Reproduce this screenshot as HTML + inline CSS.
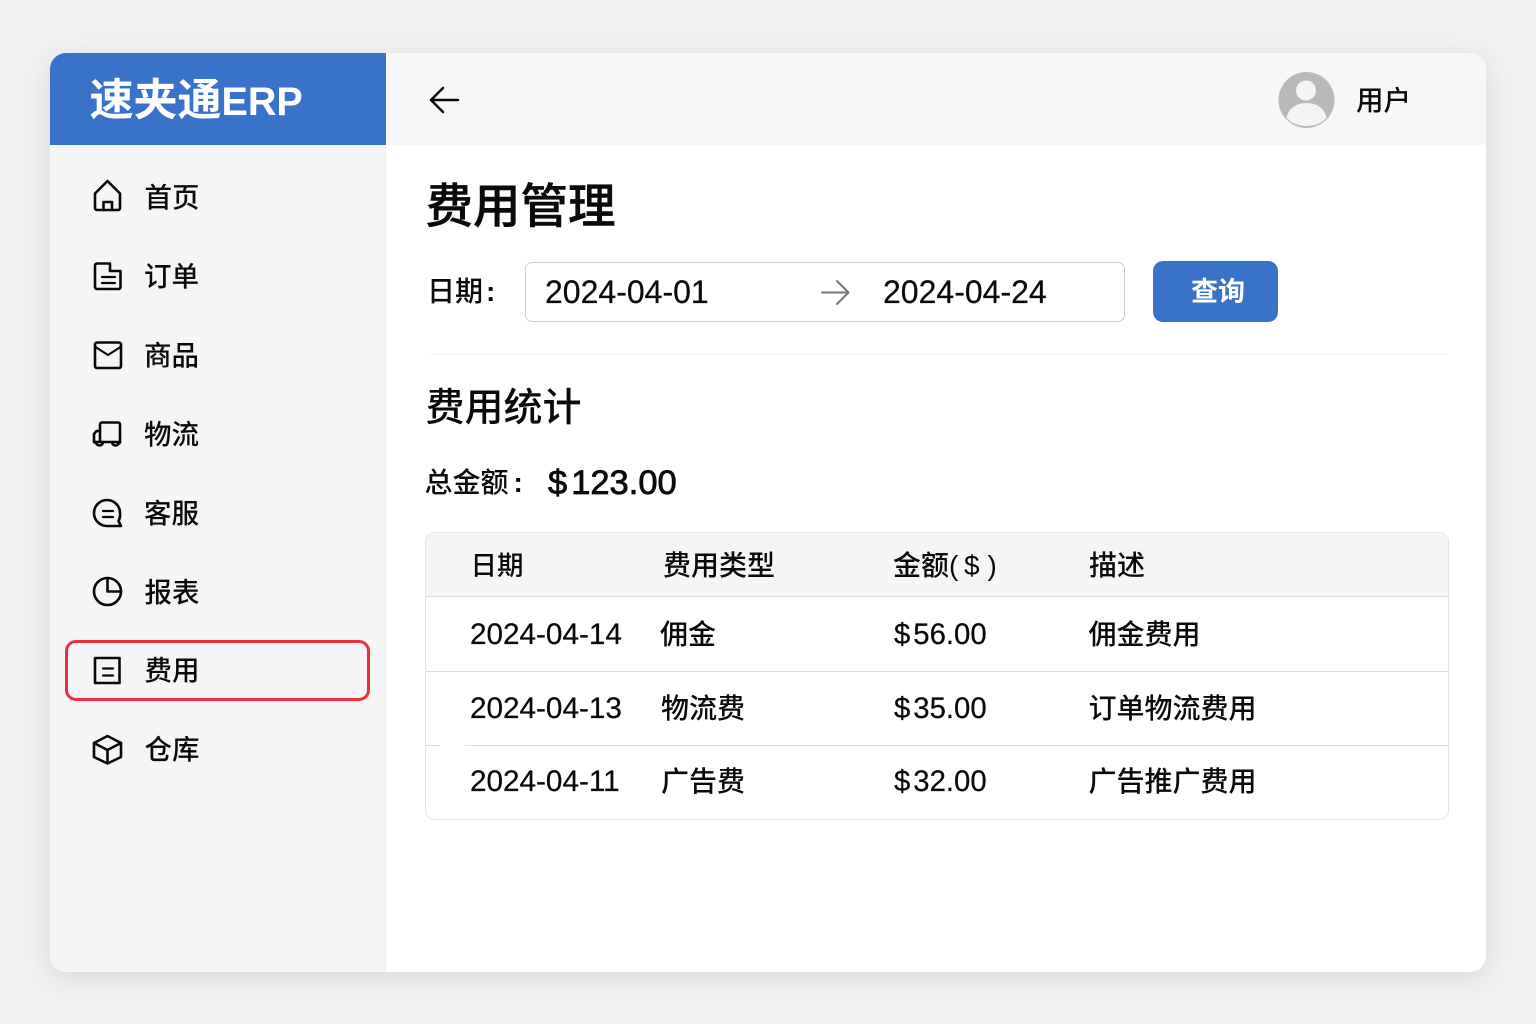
<!DOCTYPE html>
<html lang="zh-CN">
<head>
<meta charset="utf-8">
<title>费用管理</title>
<style>
html,body{margin:0;padding:0;width:1536px;height:1024px;overflow:hidden;background:#f1f1f0;}
body{position:relative;font-family:"Liberation Sans","Noto Sans CJK SC",sans-serif;color:#0a0a0a;}
.a{position:absolute;white-space:nowrap;line-height:40px;height:40px;}
.box{position:absolute;box-sizing:border-box;}
.n{font-size:27.5px;left:144.5px;font-weight:500;}
.th{font-size:28px;top:546px;font-weight:500;}
.td{font-size:28px;font-weight:500;}
.num{font-size:29.7px;-webkit-text-stroke:.25px #0a0a0a;}
.amt{font-size:29.3px;-webkit-text-stroke:.25px #0a0a0a;}
.d{margin-right:3px;}
</style>
</head>
<body>
<div class="box" style="left:50px;top:53px;width:1436px;height:919px;background:#fff;border-radius:16px;box-shadow:0 6px 26px rgba(0,0,0,.10);overflow:hidden;">
  <div class="box" style="left:0;top:0;width:336px;height:919px;background:#f5f5f5;border-right:1px solid #ededed;"></div>
  <div class="box" style="left:0;top:0;width:335.500px;height:92px;background:#3873c9;"></div>
  <div class="box" style="left:336px;top:0;width:1100px;height:92px;background:#f7f7f7;"></div>
</div>

<div class="a" style="left:89.500px;top:81px;color:#fff;font-size:44px;font-weight:700;"><span>速夹通</span><span style="font-size:39.500px;">ERP</span></div>

<div class="box" style="left:65px;top:640px;width:305px;height:61px;border:3px solid #e9303f;border-radius:11px;background:#f5f5f7;"></div>

<div class="a n" style="top:178px;">首页</div>
<div class="a n" style="top:257px;left:144px;">订单</div>
<div class="a n" style="top:336px;left:144px;">商品</div>
<div class="a n" style="top:415px;left:144px;">物流</div>
<div class="a n" style="top:494px;left:144px;">客服</div>
<div class="a n" style="top:573px;">报表</div>
<div class="a n" style="top:651px;">费用</div>
<div class="a n" style="top:730px;">仓库</div>

<div class="a" style="left:1356px;top:81px;font-size:27.500px;font-weight:500;">用户</div>

<div class="a" style="left:425.500px;top:188px;font-size:47.500px;font-weight:500;-webkit-text-stroke:.5px #0a0a0a;">费用管理</div>

<div class="a" style="left:427px;top:272px;font-size:28px;font-weight:500;">日期<span style="font-weight:700;margin-left:3px;">:</span></div>
<div class="box" style="left:525px;top:262px;width:600px;height:60px;border:1.5px solid #cbcbcb;border-radius:7px;background:#fff;"></div>
<div class="a" style="left:545px;top:272px;font-size:32px;-webkit-text-stroke:.25px #0a0a0a;">2024-04-01</div>
<div class="a" style="left:883px;top:272px;font-size:32px;-webkit-text-stroke:.25px #0a0a0a;">2024-04-24</div>
<div class="box" style="left:1153px;top:261px;width:125px;height:61px;background:#3873c9;border-radius:10px;"></div>
<div class="a" style="left:1191px;top:272px;font-size:27px;font-weight:700;color:#fff;">查询</div>

<div class="box" style="left:430px;top:353px;width:1018px;height:2px;background:#f9f9f9;"></div>

<div class="a" style="left:425.500px;top:389px;font-size:39px;font-weight:500;">费用统计</div>
<div class="a" style="left:424.500px;top:463px;font-size:28px;font-weight:500;">总金额<span style="font-weight:700;margin-left:5px;">:</span></div>
<div class="a" style="left:548px;top:463px;font-size:34.500px;-webkit-text-stroke:.8px #0a0a0a;"><span style="margin-right:4px;">$</span>123.00</div>

<div class="box" style="left:425px;top:532px;width:1024px;height:288px;border:1.5px solid #e6e6e6;border-radius:10px;background:#fff;overflow:hidden;">
  <div class="box" style="left:0;top:0;width:1024px;height:64px;background:#f5f5f5;border-bottom:1px solid #dcdcdc;"></div>
  <div class="box" style="left:0;top:138px;width:1024px;height:1px;background:#dcdcdc;"></div>
  <div class="box" style="left:0;top:212px;width:1024px;height:1px;background:#dcdcdc;"></div>
  <div class="box" style="left:14px;top:211px;width:25px;height:3px;background:#fff;"></div>
</div>

<div class="a th" style="left:470.500px;font-size:26.500px;">日期</div>
<div class="a th" style="left:663px;">费用类型</div>
<div class="a th" style="left:893px;">金额<span style="font-family:'Liberation Sans',sans-serif;">(&thinsp;$&thinsp;&hairsp;)</span></div>
<div class="a th" style="left:1089px;">描述</div>

<div class="a num" style="left:470px;top:615px;">2024-04-14</div>
<div class="a td" style="left:660px;top:615px;">佣金</div>
<div class="a amt" style="left:894px;top:615px;"><span class="d">$</span>56.00</div>
<div class="a td" style="left:1088.500px;top:615px;">佣金费用</div>

<div class="a num" style="left:470px;top:689px;">2024-04-13</div>
<div class="a td" style="left:661px;top:689px;">物流费</div>
<div class="a amt" style="left:894px;top:689px;"><span class="d">$</span>35.00</div>
<div class="a td" style="left:1088.500px;top:689px;">订单物流费用</div>

<div class="a num" style="left:470px;top:762px;">2024-04-11</div>
<div class="a td" style="left:661px;top:762px;">广告费</div>
<div class="a amt" style="left:894px;top:762px;"><span class="d">$</span>32.00</div>
<div class="a td" style="left:1088.500px;top:762px;">广告推广费用</div>

<svg width="1536" height="1024" viewBox="0 0 1536 1024" style="position:absolute;left:0;top:0;" fill="none" stroke="#0a0a0a" stroke-width="2.6" stroke-linecap="round" stroke-linejoin="round">
  <!-- home -->
  <path d="M95 193.500 L107.500 181 L120 193.500 V208 a2 2 0 0 1-2 2 H97 a2 2 0 0 1-2-2 Z"/>
  <path d="M103.500 210 V202 H112 V210"/>
  <!-- order -->
  <path d="M110 271 V263.500 H97 a2 2 0 0 0-2 2 V287 a2 2 0 0 0 2 2 H118.500 a2 2 0 0 0 2-2 V271 H110"/>
  <path d="M102 277 H115 M102 283 H115" stroke-width="2.200"/>
  <!-- product -->
  <rect x="95" y="342.500" width="26" height="25.500" rx="2"/>
  <path d="M95.500 347 L108 355 L120.500 347" stroke-width="2.200"/>
  <!-- truck -->
  <path d="M100 441 V424.500 a2 2 0 0 1 2-2 H118 a2 2 0 0 1 2 2 V442 a2 2 0 0 1-2 1.500"/>
  <path d="M100 431 H96.500 L94 434 V441 a2.500 2.500 0 0 0 2 2"/>
  <path d="M94 442 H120" />
  <path d="M96 442 a3.500 3.500 0 0 0 7 0 M112 442 a3.500 3.500 0 0 0 7 0"/>
  <!-- service -->
  <path d="M120 513 A13 13 0 1 0 107 526 H121 L118.500 521 A13 13 0 0 0 120 513 Z"/>
  <path d="M103 511 H113 M103 517 H113" stroke-width="2.200"/>
  <!-- report -->
  <circle cx="107.500" cy="591.500" r="13.500"/>
  <path d="M107.500 578 V591.500 H121"/>
  <!-- cost -->
  <rect x="95" y="658" width="24.500" height="25"/>
  <path d="M103 668.500 H113 M103 675.500 H113" stroke-width="2.200"/>
  <!-- warehouse -->
  <path d="M107.500 736 L121 743 V757 L107.500 763.500 L94 757 V743 Z"/>
  <path d="M94 743 L107.500 750 L121 743 M107.500 750 V763"/>
  <!-- back arrow -->
  <path d="M458 100 H431 M443 88 L431 100 L443 112" stroke-width="2.500"/>
  <!-- range arrow -->
  <path d="M822 292.500 H848 M837 281 L848.500 292.500 L837 304" stroke="#777" stroke-width="2"/>
  <!-- avatar -->
  <circle cx="1306.500" cy="100" r="28" fill="#b9b9b9" stroke="none"/>
  <circle cx="1306" cy="90.500" r="10" fill="#f4f4f4" stroke="none"/>
  <path d="M1286.500 118 C1288 109 1296 103 1306.500 103 C1317 103 1325 109 1326.500 118 C1321 123.500 1314 126 1306.500 126 C1299 126 1292 123.500 1286.500 118 Z" fill="#f4f4f4" stroke="none"/>
</svg>
</body>
</html>
